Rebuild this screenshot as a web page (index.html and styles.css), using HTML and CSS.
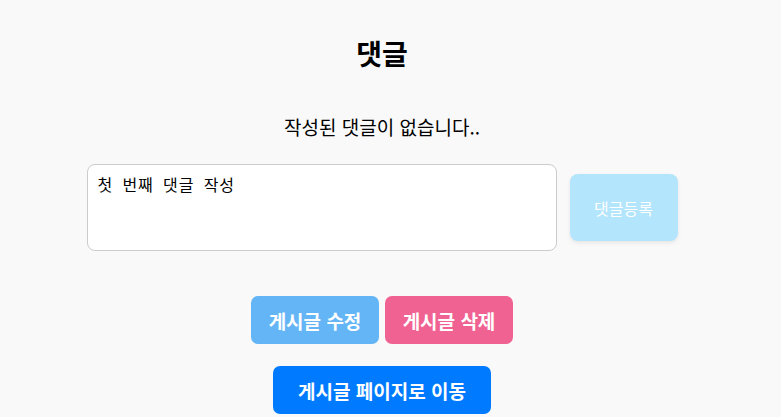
FILE: index.html
```html
<!DOCTYPE html>
<html lang="ko">
<head>
<meta charset="utf-8">
<link rel="stylesheet" href="styles.css">
</head>
<body>
<div class="page">
  <h2 class="title">댓글</h2>
  <p class="empty">작성된 댓글이 없습니다..</p>
  <div class="write">
    <textarea class="input">첫 번째 댓글 작성</textarea>
    <button class="submit">댓글등록</button>
  </div>
  <div class="actions">
    <button class="btn edit">게시글 수정</button>
    <button class="btn del">게시글 삭제</button>
  </div>
  <div class="actions">
    <button class="btn back">게시글 페이지로 이동</button>
  </div>
</div>
</body>
</html>
```
FILE: styles.css
```css
html, body {
  margin: 0;
  background: #f9f9f9;
  font-family: "Noto Sans CJK KR", "Noto Sans", sans-serif;
  color: #000;
}
.page {
  width: 764px;
  display: flex;
  flex-direction: column;
  align-items: center;
  padding-top: 33px;
}
.title {
  margin: 0;
  font-size: 28px;
  font-weight: 700;
  line-height: 40px;
}
.empty {
  margin: 40px 0 0;
  font-size: 19px;
  line-height: 28px;
}
.write {
  display: flex;
  align-items: center;
  gap: 13px;
  margin-top: 23px;
}
.input {
  width: 470px;
  height: 87px;
  box-sizing: border-box;
  border: 1px solid #cccccc;
  border-radius: 8px;
  padding: 8px 10px;
  font-family: "Noto Sans CJK KR", sans-serif;
  font-size: 16px;
  line-height: 22px;
  letter-spacing: 0.9px;
  word-spacing: 4px;
  color: #000;
  background: #fff;
  resize: none;
  outline: none;
}
.submit {
  width: 108px;
  height: 67px;
  border: none;
  border-radius: 8px;
  background: #b3e5fc;
  color: #fff;
  font-family: "Noto Sans CJK KR", sans-serif;
  font-size: 16px;
  box-shadow: 0 2px 4px rgba(0,0,0,0.08);
}
.actions {
  display: flex;
  gap: 6px;
  margin-top: 45px;
}
.actions + .actions {
  margin-top: 22px;
}
.btn {
  height: 48px;
  border: none;
  border-radius: 7px;
  color: #fff;
  font-family: "Noto Sans CJK KR", sans-serif;
  font-size: 19px;
  font-weight: 700;
  padding: 0;
}
.edit { width: 128px; background: #64b5f6; }
.del { width: 128px; background: #f06292; }
.back { width: 218px; background: #007bff; }
```
